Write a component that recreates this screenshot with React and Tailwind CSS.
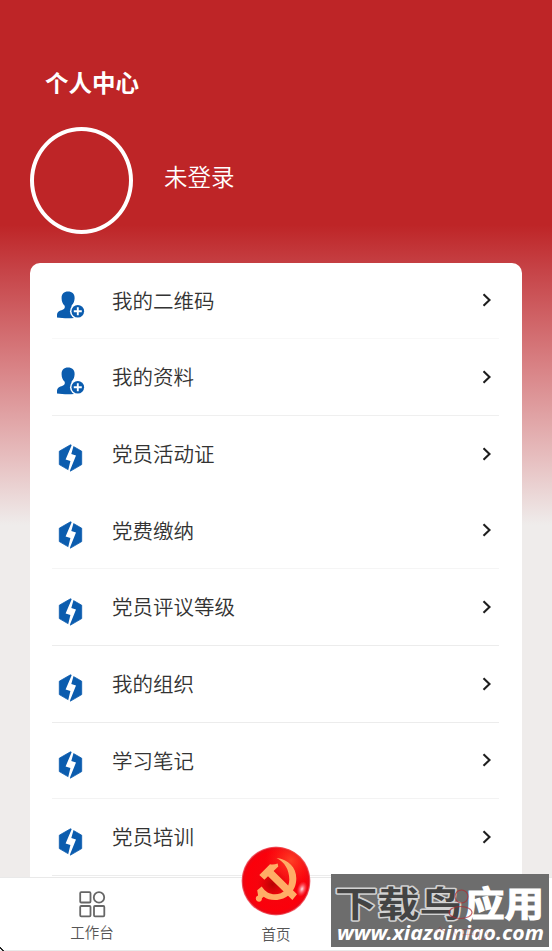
import React from 'react';

const menuItems = [
  { label: '我的二维码', icon: 'user', line: 'border-[#f8f8f8]' },
  { label: '我的资料', icon: 'user', line: 'border-[#efefef]' },
  { label: '党员活动证', icon: 'bolt', line: 'border-transparent' },
  { label: '党费缴纳', icon: 'bolt', line: 'border-[#f5f5f5]' },
  { label: '党员评议等级', icon: 'bolt', line: 'border-[#ececec]' },
  { label: '我的组织', icon: 'bolt', line: 'border-[#ececec]' },
  { label: '学习笔记', icon: 'bolt', line: 'border-[#f3f3f3]' },
  { label: '党员培训', icon: 'bolt', line: 'border-[#ececec]' },
];

function UserPlusIcon() {
  return (
    <svg width="28" height="28" viewBox="0 0 28 28">
      <path
        d="M11 .5c4.100 0 6.900 2.600 6.600 6.900-.1 3-1.300 5.300-2.900 6.800-.5 1.700.2 2.800 1.800 3.600l5.700 3v5.700c-6 1-16.200 1-22.200 0v-2.300c0-3.700 2.500-4.400 5.600-5.500 2.200-.8 2.700-2.300 1.900-4.200C5.700 12.800 4.700 10.400 4.600 7.400 4.300 3.100 7 .5 11 .5z"
        fill="#0b5cae"
      />
      <circle cx="20.800" cy="20.300" r="7.800" fill="#fff" />
      <circle cx="20.800" cy="20.300" r="6.300" fill="#0b5cae" />
      <path d="M20.800 16.300v8M16.800 20.300h8" stroke="#fff" strokeWidth="1.900" />
    </svg>
  );
}

function BoltIcon() {
  return (
    <svg width="28" height="28" viewBox="0 0 28 28">
      <path d="M13.500.8 24.700 7.200v13.400l-11.200 6.500L2.300 20.600V7.200z" fill="#0b5cae" stroke="#0b5cae" strokeWidth="0.800" strokeLinejoin="round" />
      <path d="M15.200 0 8.600 15.400l4.800 1.700L10.800 28l1.500.2L19 11.600l-4.700-1.700L16.900.8z" fill="#fff" />
    </svg>
  );
}

function PartyEmblem() {
  return (
    <svg width="70" height="70" viewBox="0 0 70 70">
      <defs>
        <radialGradient id="ball" cx="50%" cy="50%" r="50%">
          <stop offset="0" stopColor="#f00810" />
          <stop offset="0.850" stopColor="#fb000b" />
          <stop offset="0.950" stopColor="#ec0714" />
          <stop offset="1" stopColor="#f0808a" />
        </radialGradient>
        <radialGradient id="glow" cx="72%" cy="20%" r="38%">
          <stop offset="0" stopColor="#ff5a30" stopOpacity="0.700" />
          <stop offset="1" stopColor="#ff3020" stopOpacity="0" />
        </radialGradient>
        <radialGradient id="shade" cx="45%" cy="55%" r="22%">
          <stop offset="0" stopColor="#ad0000" stopOpacity="0.850" />
          <stop offset="1" stopColor="#cc0000" stopOpacity="0" />
        </radialGradient>
        <radialGradient id="shine">
          <stop offset="0" stopColor="#fff" stopOpacity="0.900" />
          <stop offset="1" stopColor="#ff6a7a" stopOpacity="0" />
        </radialGradient>
      </defs>
      <circle cx="35" cy="35" r="34.500" fill="url(#ball)" />
      <circle cx="35" cy="35" r="34" fill="url(#glow)" />
      <circle cx="35" cy="35" r="34" fill="url(#shade)" />
      <ellipse cx="61" cy="43" rx="5" ry="8" fill="url(#shine)" transform="rotate(18 61 43)" />
      <g fill="#ffad66">
        <path d="M35.500 12c12 1.500 19.800 9.500 19.800 20.500C55.300 45 46 54 34 54c-4.600 0-8.300-1.200-11.300-3.300l-1.800 1.600c.3 1.900-1 3.400-2.800 3.400-1.900 0-3.300-1.500-3.300-3.200 0-1.500.9-2.600 2.300-3l-.9-5.300 4.500-3.700c3.500 5.300 8 7.800 13.300 7.800 8.400 0 14.300-6 14.300-14.700C48.300 24 43.800 16 35.500 12z" />
        <path d="M18.300 29 29 18.300c2.600.6 5 .2 7.700-.7l.6 3L32.600 25 56 48.200 51.400 54 27 30.200l-3.600 3.500z" />
      </g>
    </svg>
  );
}

function ChevronIcon() {
  return (
    <svg width="10" height="14" viewBox="0 0 10 14" fill="none" stroke="#1f1f1f" strokeWidth="2.100">
      <path d="m1.500 1.200 6 5.800-6 5.800" />
    </svg>
  );
}

function MenuRow({ item }) {
  return (
    <div className={`flex h-[76.7px] items-center border-b ${item.line}`}>
      <div className="mt-[9px] ml-[5px] w-[28px]">{item.icon === 'user' ? <UserPlusIcon /> : <BoltIcon />}</div>
      <span className="mb-px ml-[27px] flex-1 text-[20.5px] leading-none font-[350] text-[#333]">{item.label}</span>
      <div className="mr-[7px]">
        <ChevronIcon />
      </div>
    </div>
  );
}

function Watermark() {
  return (
    <svg className="absolute top-[874px] left-[331px]" width="218" height="73" viewBox="0 0 218 73">
      <rect width="218" height="73" fill="#6d6d6d" />
      <g fontFamily="'Noto Sans CJK SC', sans-serif" fontWeight="700" fontSize="35">
        <text x="4" y="42.500" textLength="127" lengthAdjust="spacingAndGlyphs" fill="#444" stroke="#d2d2d2" strokeWidth="3" paintOrder="stroke" strokeLinejoin="round">下载鸟</text>
        <text x="134" y="42.500" textLength="79" lengthAdjust="spacingAndGlyphs" fill="#fff" stroke="#fff" strokeWidth="1.200">应用</text>
      </g>
      <text x="6" y="66" textLength="207" lengthAdjust="spacingAndGlyphs" fontFamily="'Noto Sans', sans-serif" fontWeight="700" fontStyle="italic" fontSize="20" fill="#fff">www.xiazainiao.com</text>
      {/* active tab showing through */}
      <g fill="none" stroke="#b02a30" strokeOpacity="0.700" strokeWidth="1.200">
        <circle cx="130.500" cy="22.500" r="6.500" />
        <ellipse cx="129.500" cy="38.500" rx="11.500" ry="6" />
      </g>
      <text x="102" y="64" fontFamily="'Noto Sans CJK SC', sans-serif" fontSize="14" fontWeight="300" fill="#b02a30" fillOpacity="0.350">个人中心</text>
    </svg>
  );
}

export default function App() {
  return (
    <div className="relative flex h-[951px] w-[552px] flex-col overflow-hidden bg-[#efeceb] bg-[linear-gradient(180deg,#be2527_0px,#be2527_225px,#c64347_270px,#d98487_370px,#e6bcbd_455px,#efeceb_525px)] font-['Noto_Sans_CJK_SC',sans-serif]">
      {/* Header */}
      <div className="h-[263px] shrink-0 px-[30px] pt-[70px] text-white">
        <h1 className="ml-[15px] text-[23.5px] leading-[24px] font-bold">个人中心</h1>
        <div className="mt-[33px] flex items-center">
          <div className="h-[107px] w-[103px] rounded-[50%] border-4 border-white" />
          <span className="mb-[7px] ml-[31px] text-[23.5px] leading-none font-[350]">未登录</span>
        </div>
      </div>

      {/* Menu card */}
      <div className="mx-[30px] h-[614px] shrink-0 overflow-hidden rounded-t-[10px] bg-white pr-[23px] pl-[22px]">
        <div className="-mt-[0.6px]">
          {menuItems.map(item => (
            <MenuRow key={item.label} item={item} />
          ))}
        </div>
      </div>

      {/* Bottom navigation */}
      <div className="flex h-[74px] shrink-0 border-t border-b border-[#e9e9e9] bg-white text-[14.5px] leading-none font-[350] text-[#555]">
        <div className="flex w-[184px] flex-col items-center pt-[13px]">
          <svg width="27" height="27" viewBox="0 0 27 27" fill="none" stroke="#666" strokeWidth="1.800">
            <rect x="1.200" y="1.200" width="10.300" height="10.300" rx="1" />
            <circle cx="20" cy="6.400" r="5.200" />
            <rect x="1.200" y="15" width="10.300" height="10.300" rx="1" />
            <rect x="15" y="15" width="10.300" height="10.300" rx="1" />
          </svg>
          <span className="mt-[7px]">工作台</span>
        </div>
        <div className="flex w-[184px] flex-col items-center">
          <div className="-mt-8">
            <PartyEmblem />
          </div>
          <span className="mt-[11px]">首页</span>
        </div>
      </div>

      <Watermark />
      <svg className="absolute bottom-0 left-0" width="4" height="4" viewBox="0 0 4 4">
        <path d="M0 0h1v1h1v1h1v1h1v1H2V3H1V2H0z" fill="#222" />
      </svg>
    </div>
  );
}
